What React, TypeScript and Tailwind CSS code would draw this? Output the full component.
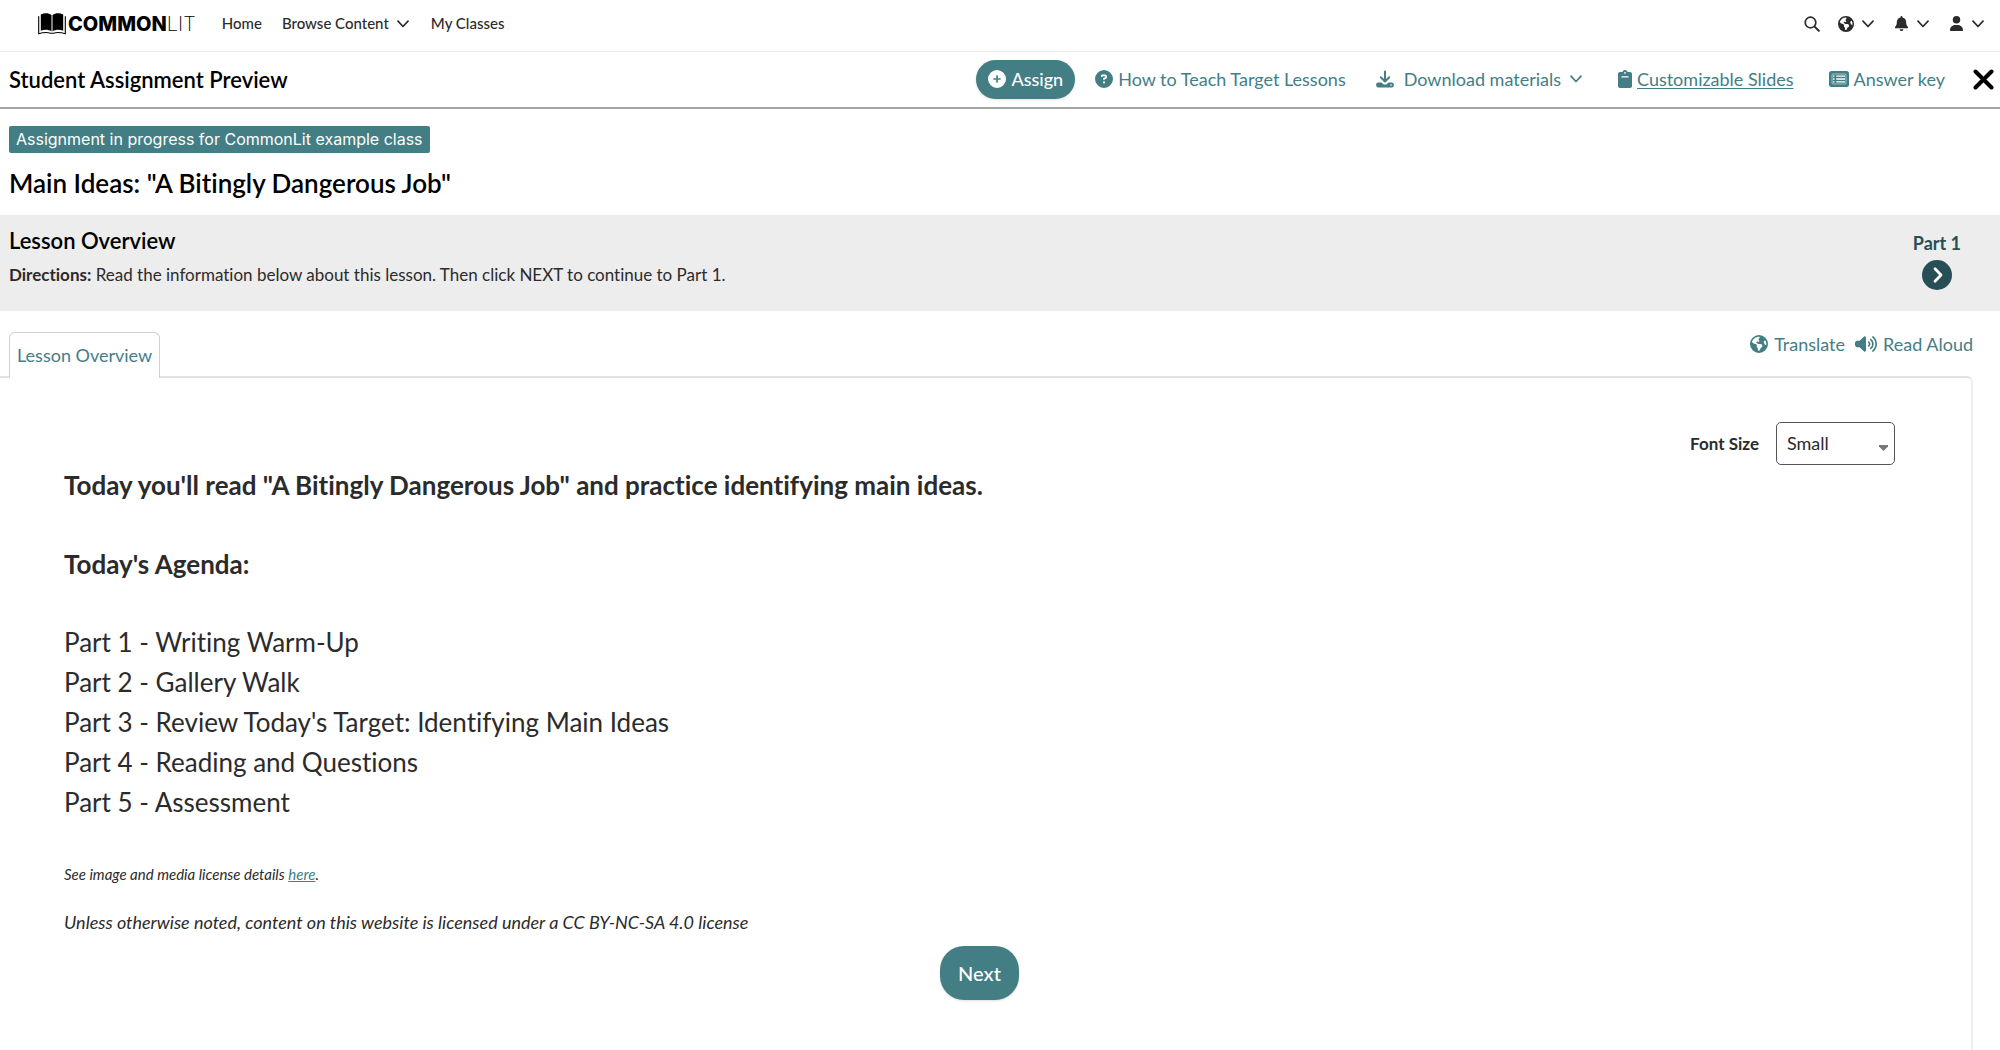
import type { ReactNode } from "react";
import {
  FaBell,
  FaCirclePlus,
  FaCircleQuestion,
  FaEarthAmericas,
  FaUser,
  FaVolumeHigh,
} from "react-icons/fa6";

const agenda = [
  "Part 1 - Writing Warm-Up",
  "Part 2 - Gallery Walk",
  "Part 3 - Review Today's Target: Identifying Main Ideas",
  "Part 4 - Reading and Questions",
  "Part 5 - Assessment",
];

function Chevron({ className = "w-3" }: { className?: string }) {
  return (
    <svg viewBox="0 0 12 8" className={`h-2 ${className}`} fill="none" stroke="currentColor" strokeWidth="1.7" strokeLinecap="round" strokeLinejoin="round" aria-hidden="true">
      <path d="M1 1.2 6 6.5 11 1.2" />
    </svg>
  );
}

function BookIcon() {
  return (
    <svg viewBox="0 0 28 22" className="w-7 h-[22px]" aria-hidden="true">
      <path d="M2.8 1.6C6.5-.2 10.5 0 13.5 2v16.4c-3-1.9-7-2-10.7-.6zM25.2 1.6C21.5-.2 17.5 0 14.5 2v16.4c3-1.9 7-2 10.7-.6z" fill="#000" />
      <path d="M.7 3.2v17.6c4.5-1.4 9-1.5 11.8-.5h3c2.8-1 7.3-.9 11.8.5V3.2" fill="none" stroke="#000" strokeWidth="1.1" />
    </svg>
  );
}

function SearchIcon() {
  return (
    <svg viewBox="0 0 16 16" className="size-4" fill="none" stroke="currentColor" strokeLinecap="round" aria-hidden="true">
      <circle cx="6.5" cy="6.5" r="5.3" strokeWidth="1.7" />
      <path d="m10.6 10.6 4.2 4.2" strokeWidth="2" />
    </svg>
  );
}

function DownloadIcon() {
  return (
    <svg viewBox="0 0 18 18" className="size-[18px]" aria-hidden="true">
      <path d="M9 1.5v9.5M4.8 7.3 9 11.5l4.2-4.2" fill="none" stroke="currentColor" strokeWidth="2" strokeLinecap="round" strokeLinejoin="round" />
      <path fillRule="evenodd" d="M2.3 12.5h3.2L7.7 14.5h2.6l2.2-2h3.2c1.2 0 2.1.9 2.1 2v1c0 1.1-.9 2-2.1 2H2.3c-1.2 0-2.1-.9-2.1-2v-1c0-1.1.9-2 2.1-2zM15 14.3a.8.8 0 1 0 0 1.6.8.8 0 0 0 0-1.6z" fill="currentColor" />
    </svg>
  );
}

function ClipboardIcon() {
  return (
    <svg viewBox="0 0 14 18" className="w-[14px] h-[18px]" aria-hidden="true">
      <path fillRule="evenodd" d="M2 2h2.4a2.7 2.7 0 0 1 5.2 0H12c1.1 0 2 .9 2 2v12c0 1.1-.9 2-2 2H2c-1.1 0-2-.9-2-2V4c0-1.1.9-2 2-2zM7 1.9a.9.9 0 1 0 0 1.8.9.9 0 0 0 0-1.8zM4 6.2a.7.7 0 0 0 0 1.4h6a.7.7 0 0 0 0-1.4z" fill="currentColor" />
    </svg>
  );
}

function ListIcon() {
  return (
    <svg viewBox="0 0 20 16" className="w-5 h-4" aria-hidden="true">
      <rect width="20" height="16" rx="2.5" fill="currentColor" />
      <rect x="3" y="3" width="14" height="10" rx="1" fill="none" stroke="#fff" strokeWidth=".5" />
      <path d="M7.2 5.2H16M7.2 8H16M7.2 10.8H16" stroke="#fff" strokeWidth="1.3" />
      <path d="M4 5.2h1.5M4 8h1.5M4 10.8h1.5" stroke="#fff" strokeWidth="1.3" />
    </svg>
  );
}

function MenuButton({ label, children }: { label: string; children: ReactNode }) {
  return (
    <button type="button" aria-label={label} className="flex items-center gap-2">
      {children}
      <Chevron />
    </button>
  );
}

export default function App() {
  return (
    <div className="min-h-screen bg-white font-['Lato','Open_Sans',sans-serif] [font-variant-ligatures:none] text-[#2b2b2b]">
      {/* Site navigation */}
      <nav className="flex items-center justify-between h-[52px] border-b border-[#ebebeb] pl-[38px] pr-4 pb-1 text-[15px] font-medium">
        <div className="flex items-center">
          <a href="#" className="flex items-center gap-0.5 mr-[26px] text-black" aria-label="CommonLit">
            <BookIcon />
            <span className="font-['Inter',sans-serif] text-[20px] leading-6">
              <span className="font-extrabold">COMMON</span>
              <span className="font-extralight">LIT</span>
            </span>
          </a>
          <a href="#" className="mr-5">Home</a>
          <button type="button" className="flex items-center gap-2 mr-[22px]">
            Browse Content
            <Chevron />
          </button>
          <a href="#">My Classes</a>
        </div>
        <div className="flex items-center gap-[18px]">
          <button type="button" aria-label="Search"><SearchIcon /></button>
          <div className="flex items-center gap-5">
            <MenuButton label="Language"><FaEarthAmericas className="size-4" /></MenuButton>
            <MenuButton label="Notifications"><FaBell className="size-[15px]" /></MenuButton>
            <MenuButton label="Account"><FaUser className="size-[15px]" /></MenuButton>
          </div>
        </div>
      </nav>

      {/* Preview toolbar */}
      <header className="flex items-center justify-between h-[57px] border-b-2 border-[#a3a3a3] pl-[9px] pr-[6px] text-[#437e85]">
        <h1 className="pb-px text-[22px] font-semibold text-black">Student Assignment Preview</h1>
        <div className="flex items-center pb-px text-lg">
          <button type="button" className="flex items-center gap-[5px] h-[39px] px-3 mr-5 rounded-full bg-[#437e85] font-medium text-white shadow">
            <FaCirclePlus className="size-[18px]" />
            Assign
          </button>
          <a href="#" className="flex items-center gap-[5px] mr-[30px]">
            <FaCircleQuestion className="size-[18px]" />
            How to Teach Target Lessons
          </a>
          <button type="button" className="flex items-center gap-[10px] mr-[35px]">
            <DownloadIcon />
            <span className="flex items-center gap-2">
              Download materials
              <Chevron className="w-[14px]" />
            </span>
          </button>
          <a href="#" className="flex items-center gap-[5px] mr-[35px]">
            <ClipboardIcon />
            <span className="underline underline-offset-2">Customizable Slides</span>
          </a>
          <a href="#" className="flex items-center gap-[5px] mr-7">
            <ListIcon />
            Answer key
          </a>
          <button type="button" aria-label="Close" className="text-black">
            <svg viewBox="0 0 21 21" className="size-[21px]" fill="none" stroke="currentColor" strokeWidth="4" strokeLinecap="round" aria-hidden="true">
              <path d="m2.5 2.5 16 16M18.5 2.5l-16 16" />
            </svg>
          </button>
        </div>
      </header>

      <div className="px-[9px] pt-[17px] pb-4">
        <span className="block w-fit px-[7px] rounded-xs bg-[#437e85] font-['Inter',sans-serif] text-base leading-[27px] text-white">
          Assignment in progress for CommonLit example class
        </span>
        <h2 className="mt-[14px] text-[26px] leading-8 font-semibold text-black">Main Ideas: "A Bitingly Dangerous Job"</h2>
      </div>

      <section className="flex justify-between h-24 bg-[#ededed] pl-[9px] pr-[39px]">
        <div className="pt-3">
          <h3 className="text-[22px] leading-7 font-semibold text-black">Lesson Overview</h3>
          <p className="mt-2 text-[17px] leading-6">
            <strong className="font-bold">Directions:</strong> Read the information below about this lesson. Then click NEXT to continue to Part 1.
          </p>
        </div>
        <button type="button" className="flex flex-col items-center gap-[5px] h-fit pt-4 text-lg leading-6 font-bold text-[#284f55]">
          Part 1
          <svg viewBox="0 0 30 30" className="size-[30px]" aria-hidden="true">
            <circle cx="15" cy="15" r="15" fill="currentColor" />
            <path d="m13 8.8 6 6.2-6 6.2" fill="none" stroke="#fff" strokeWidth="2.8" strokeLinecap="round" strokeLinejoin="round" />
          </svg>
        </button>
      </section>

      {/* Lesson tab and reading tools */}
      <main className="pr-[27px]">
        <div className="flex items-start justify-between pt-[21px] text-lg text-[#437e85]">
          <button type="button" className="relative z-10 h-[46px] -mb-0.5 ml-[9px] px-[7px] pb-0.5 rounded-t-md border border-b-0 border-[#d0d0d0] bg-white">
            Lesson Overview
          </button>
          <div className="flex items-center gap-[10px] leading-6">
            <button type="button" className="flex items-center gap-[6px]">
              <FaEarthAmericas className="size-[18px]" />
              Translate
            </button>
            <button type="button" className="flex items-center gap-[6px]">
              <FaVolumeHigh className="w-[22px] h-[18px]" />
              Read Aloud
            </button>
          </div>
        </div>

        <div className="min-h-[674px] border-t-2 border-r-2 border-t-[#e2e2e2] border-r-[#f0f0f0] rounded-tr-md pl-16 pr-[76px] pt-11">
          <div className="flex items-center justify-end gap-[17px]">
            <label htmlFor="font-size" className="text-[17px] font-bold">Font Size</label>
            <span className="relative">
              <select id="font-size" defaultValue="Small" className="appearance-none w-[119px] h-[43px] px-[10px] pb-0.5 rounded-[5px] border border-[#555] bg-white text-lg">
                <option>Small</option>
                <option>Medium</option>
                <option>Large</option>
              </select>
              <svg viewBox="0 0 9 6" className="absolute right-[7px] bottom-[14px] w-[9px] h-[6px]" aria-hidden="true">
                <path d="M0 0h9v1.5L4.5 6 0 1.5z" fill="#777" />
              </svg>
            </span>
          </div>

          <div className="text-[26px] leading-10">
            <p className="font-bold">Today you'll read "A Bitingly Dangerous Job" and practice identifying main ideas.</p>
            <p className="mt-[39px] font-bold">Today's Agenda:</p>
            <ul className="mt-[38px]">
              {agenda.map((item) => (
                <li key={item}>{item}</li>
              ))}
            </ul>
          </div>

          <p className="mt-10 text-[15px] leading-6 italic">
            See image and media license details <a href="#" className="text-[#437e85] underline">here</a>.
          </p>
          <p className="mt-6 text-lg leading-6 italic">
            Unless otherwise noted, content on this website is licensed under a CC BY-NC-SA 4.0 license
          </p>
          <div className="flex justify-center mt-3">
            <button type="button" className="h-[54px] px-[18px] rounded-3xl bg-[#437e85] text-xl font-medium text-white shadow">
              Next
            </button>
          </div>
        </div>
      </main>
    </div>
  );
}
